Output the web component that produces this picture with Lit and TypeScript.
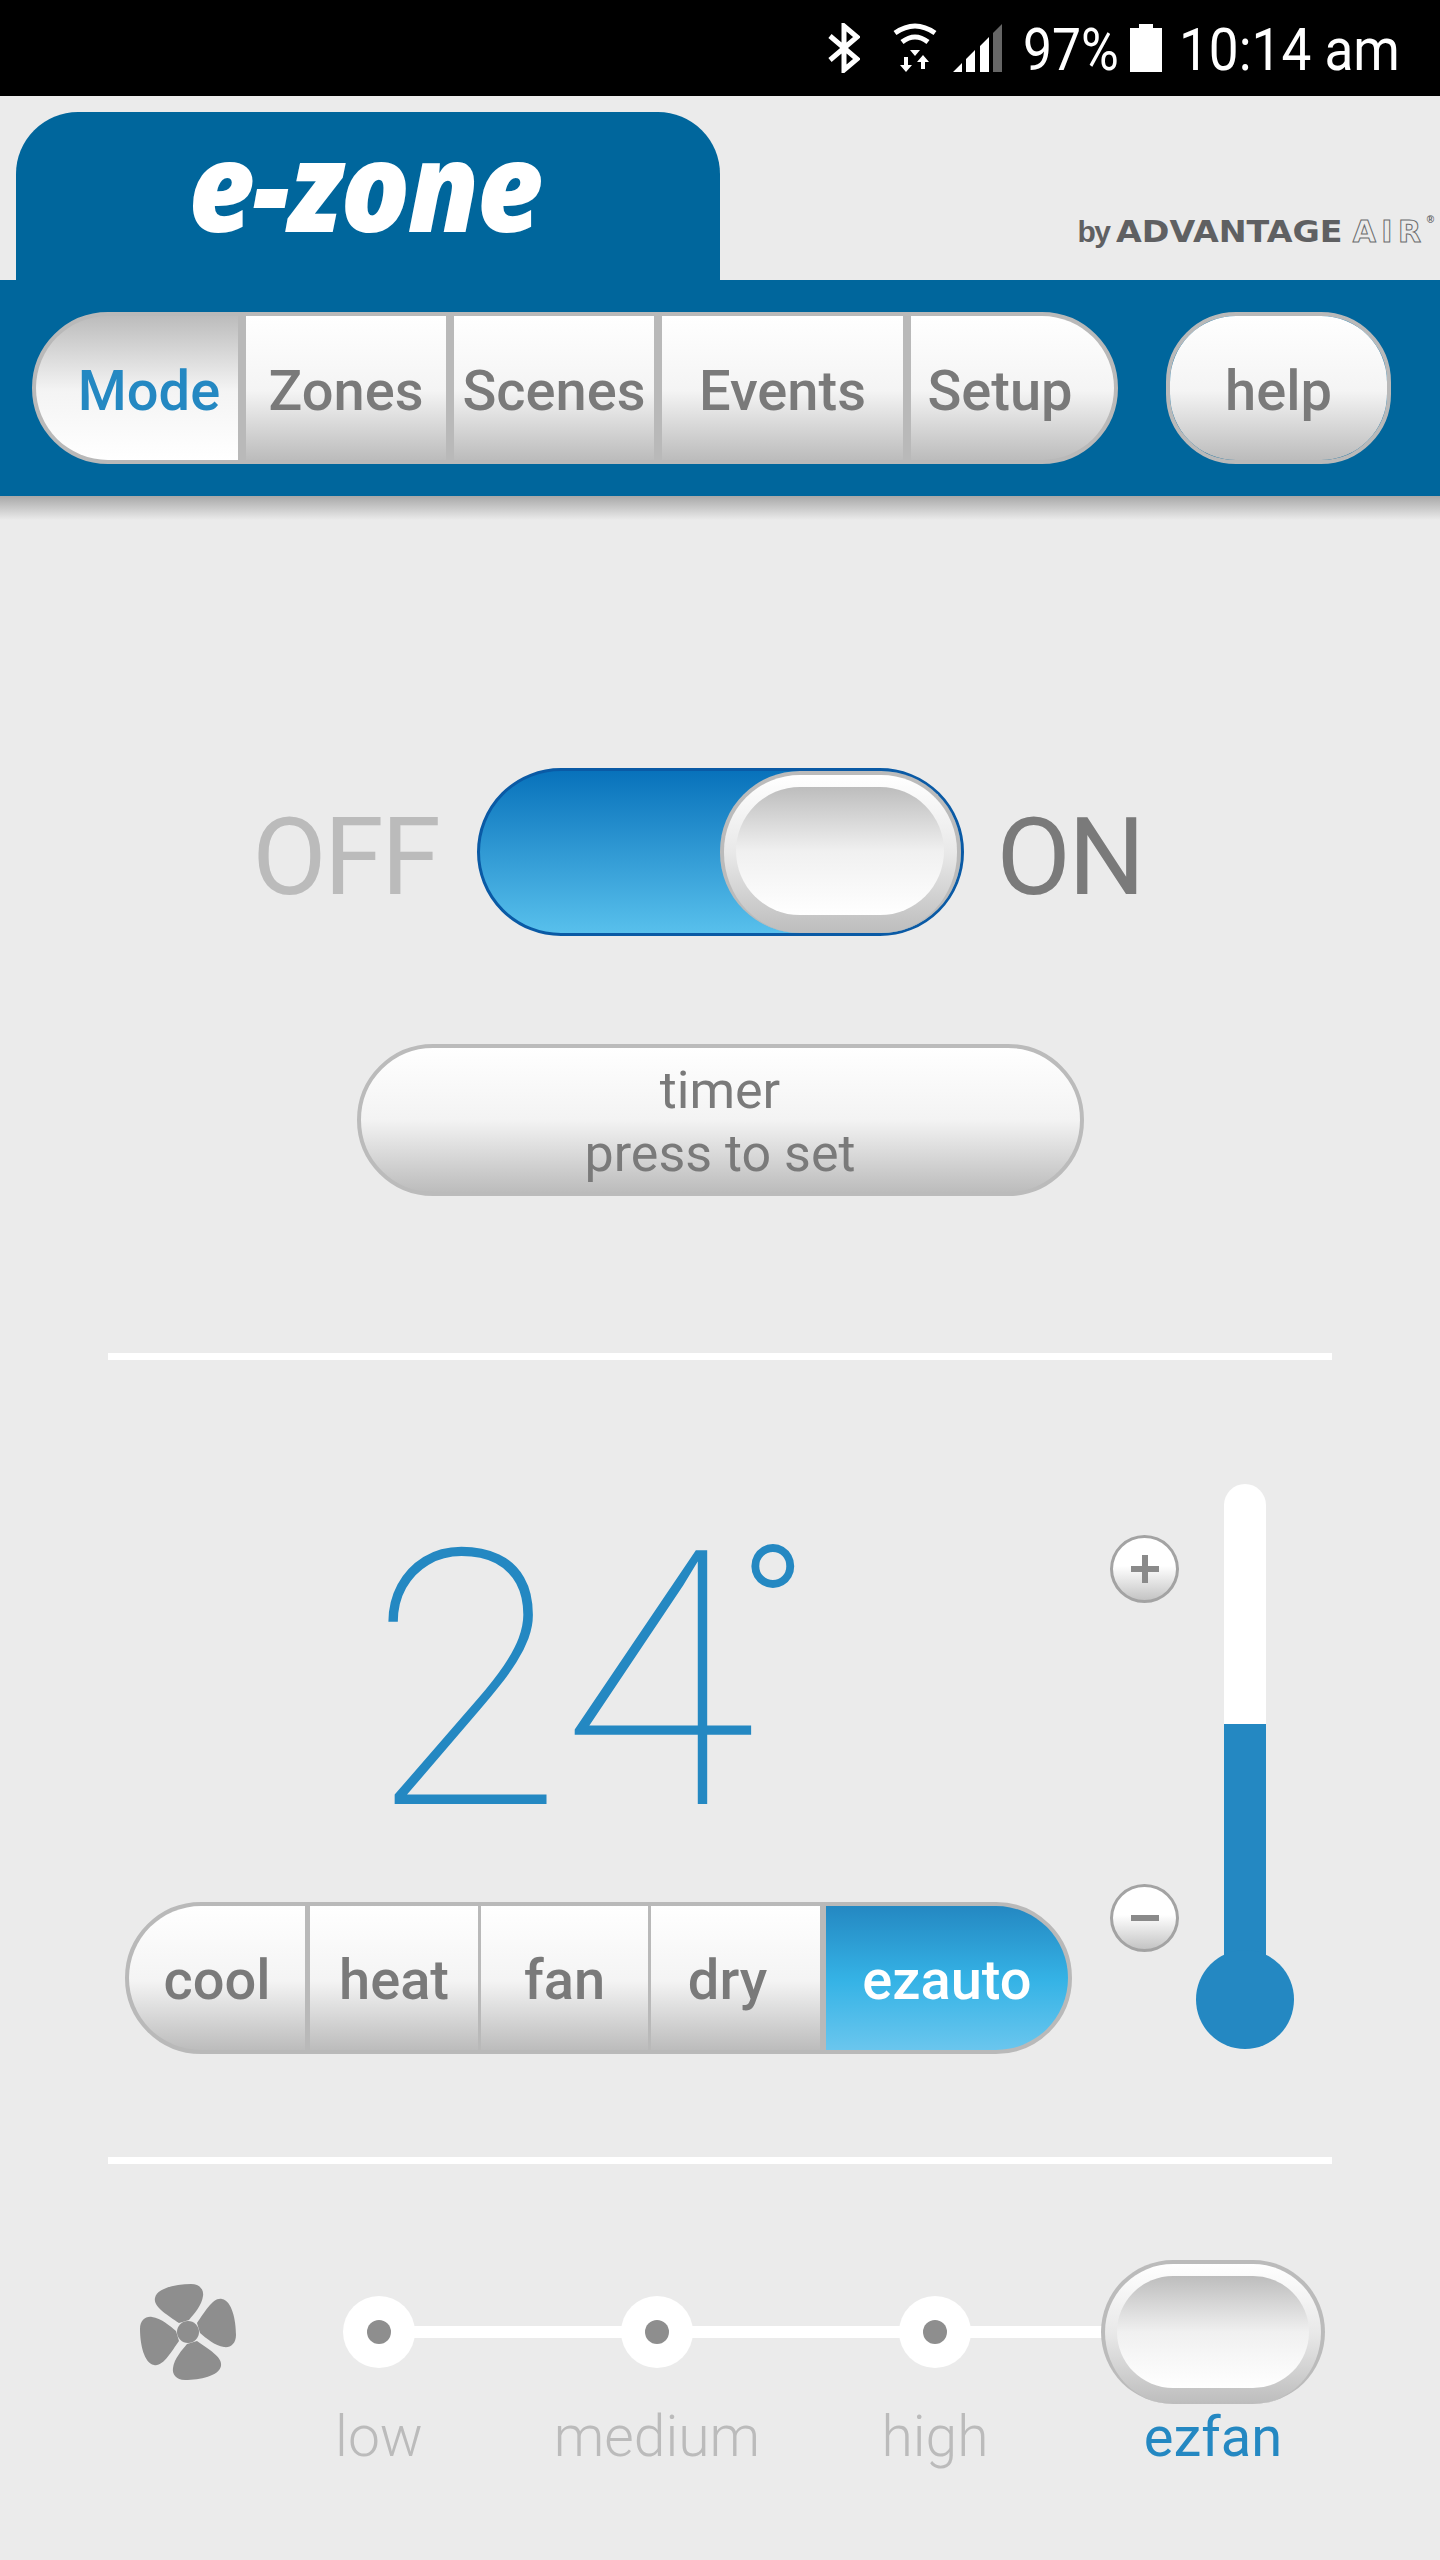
import { html, svg, css, LitElement } from 'lit';
import { customElement } from 'lit/decorators.js';

const NAV = ['Mode', 'Zones', 'Scenes', 'Events', 'Setup'];
const NAV_WIDTHS = [202, 200, 200, 241, 204];
const MODES = ['cool', 'heat', 'fan', 'dry', 'ezauto'];
const MODE_WIDTHS = [176, 168, 167, 169, 242];
const MODE_GAPS = [0, 5, 3, 3, 6];
const SPEEDS = ['low', 'medium', 'high', 'ezfan'];

const FAN_BLADE = 'M-9 -9C-20 -17 -35 -25 -33 -34C-31 -44 -12 -48 3 -48C12 -48 16 -42 15 -36C14 -27 6 -18 1 -12Z';

@customElement('app-root')
export class AppRoot extends LitElement {
  static styles = css`
    :host {
      display: block;
      width: 1440px;
      height: 2560px;
      overflow: hidden;
      background: #ebebeb;
      color: #7a7a7a;
      font-family: Roboto, "Liberation Sans", sans-serif;
    }
    svg { display: block; flex: none; }

    .status {
      height: 96px;
      background: #000;
      display: flex;
      align-items: center;
      color: #fff;
      padding-left: 828px;
      box-sizing: border-box;
    }
    .status .num {
      font-size: 60px;
      line-height: 96px;
      padding-top: 4px;
      transform-origin: left center;
      white-space: nowrap;
      flex: none;
    }
    .pct { width: 93px; margin-left: 21px; transform: scaleX(.86); }
    .clock { width: 217px; margin-left: 17px; transform: scaleX(.885); }

    .brand {
      height: 184px;
      display: flex;
      align-items: flex-end;
      justify-content: space-between;
      padding-left: 16px;
    }
    .tab {
      width: 704px;
      height: 168px;
      background: #00669c;
      border-radius: 62px 62px 0 0;
      display: flex;
      justify-content: center;
    }
    .logo {
      color: #fff;
      font-family: "Open Sans", sans-serif;
      font-weight: 800;
      font-style: italic;
      font-size: 124px;
      line-height: 144px;
      letter-spacing: -3px;
      margin-left: -7px;
      transform: scaleX(.93);
    }
    .by {
      display: flex;
      align-items: baseline;
      margin: 0 6px 31px 0;
      color: #5f6062;
      white-space: nowrap;
    }
    .by .small {
      font-family: "Liberation Sans", sans-serif;
      font-size: 30px;
      font-weight: 700;
      letter-spacing: -1.5px;
      margin-right: 6px;
    }
    .by .adv {
      font-family: "DejaVu Sans", sans-serif;
      font-weight: 700;
      font-size: 30px;
      margin-right: 33px;
      transform: scaleX(1.11);
      transform-origin: left center;
    }
    .by .air {
      font-family: "DejaVu Sans", sans-serif;
      font-weight: 700;
      font-size: 30px;
      color: transparent;
      -webkit-text-stroke: 1px #6a6b6d;
      letter-spacing: 5.5px;
    }
    .by .reg {
      font-family: "Liberation Sans", sans-serif;
      font-size: 10px;
      font-weight: 700;
      align-self: flex-start;
    }

    .navbar {
      height: 216px;
      background: #00669c;
      box-sizing: border-box;
      padding: 32px;
      display: flex;
      gap: 48px;
    }
    .group {
      display: flex;
      box-sizing: border-box;
      height: 152px;
      border: 4px solid #b9b9b9;
      border-radius: 76px;
      overflow: hidden;
      background: #b9b9b9;
    }
    .cell {
      display: flex;
      align-items: center;
      justify-content: center;
      box-sizing: border-box;
      background: linear-gradient(#fff 0%, #f4f4f4 52%, #bcbcbc 100%);
      font-size: 56px;
      font-weight: 500;
      padding-top: 6px;
      flex: none;
    }
    .nav .cell { margin-left: 8px; }
    .nav .cell:first-child { margin-left: 0; padding-left: 24px; }
    .nav .cell:last-child { padding-right: 26px; }
    .nav .cell.on {
      background: linear-gradient(#bcbcbc 0%, #f4f4f4 52%, #fff 100%);
      color: #2488c2;
    }
    .help {
      width: 225px;
      border-radius: 70px;
    }
    .help .cell { width: 100%; }

    .shadow {
      height: 24px;
      background: linear-gradient(#a8a8a8, #ebebeb);
    }

    .power {
      margin-top: 248px;
      height: 168px;
      display: grid;
      grid-template-columns: 1fr 487px 1fr;
      column-gap: 36px;
      align-items: center;
    }
    .power span {
      height: 168px;
      font-size: 108px;
      font-weight: 400;
      letter-spacing: -2.5px;
      line-height: 178px;
    }
    .power .off { justify-self: end; color: #bbb; margin-right: 2px; }
    .power .on-label { margin-left: -3px; }
    .toggle {
      box-sizing: border-box;
      height: 168px;
      border: 3px solid #0a5aa5;
      border-radius: 84px;
      background: linear-gradient(#0872bb, #58c0ec);
      display: flex;
      justify-content: flex-end;
    }
    .knob {
      box-sizing: border-box;
      height: 162px;
      border: 4px solid #bbb;
      border-bottom: none;
      border-radius: 80px;
      background: linear-gradient(#fff 0%, #e8e8e8 50%, #bdbdbd 100%);
      display: flex;
      justify-content: center;
    }
    .toggle .knob { width: 241px; padding-top: 12px; }
    .knob i {
      display: block;
      border-radius: 64px;
      background: linear-gradient(#bdbdbd 0%, #f0f0f0 50%, #fff 100%);
    }
    .toggle .knob i { width: 208px; height: 128px; }

    .timer {
      box-sizing: border-box;
      width: 727px;
      height: 152px;
      margin: 108px auto 0;
      border: 4px solid #bbb;
      border-radius: 76px;
      background: linear-gradient(#fff 0%, #f3f3f3 50%, #bcbcbc 100%);
      text-align: center;
      font-size: 52px;
      font-weight: 400;
      line-height: 63px;
      padding-top: 11px;
    }

    .rule {
      height: 7px;
      background: #fff;
      margin: 0 108px;
    }
    .rule.first { margin-top: 157px; }

    .climate {
      height: 797px;
      display: flex;
      padding-left: 125px;
    }
    .left { width: 947px; }
    .temp {
      height: 542px;
      box-sizing: border-box;
      padding: 152px 0 0 243px;
      color: #2488c2;
      display: flex;
      align-items: flex-start;
    }
    .digits {
      font-size: 357px;
      font-weight: 100;
      letter-spacing: -3px;
      line-height: 340px;
    }
    /* pull the 4's advance in so the degree sign sits against it */
    .digits b { font-weight: 100; letter-spacing: -17px; }
    .deg {
      font-size: 180px;
      font-weight: 300;
      line-height: 180px;
      margin-top: 11px;
    }
    .modes { width: 947px; }
    .modes .cell { font-size: 56px; padding-top: 4px; }
    .modes .cell:nth-child(4) { padding-right: 16px; }
    .modes .cell.on {
      color: #fff;
      background: linear-gradient(#2488c2 0%, #35b3e6 52%, #6ac6ee 100%);
    }
    .steppers {
      width: 69px;
      margin-left: 38px;
      padding-top: 175px;
      display: flex;
      flex-direction: column;
      gap: 281px;
    }
    .step {
      box-sizing: border-box;
      width: 69px;
      height: 68px;
      border: 3px solid #a3a3a3;
      border-radius: 50%;
      background: linear-gradient(#fff 45%, #c4c4c4 100%);
      display: flex;
      align-items: center;
      justify-content: center;
    }
    .thermo {
      width: 98px;
      margin-left: 17px;
      padding-top: 124px;
      display: flex;
      flex-direction: column;
      align-items: center;
    }
    .tube { width: 42px; flex: none; }
    .tube.empty { height: 240px; background: #fff; border-radius: 21px 21px 0 0; }
    .tube.full { height: 236px; background: #2488c2; }
    .bulb {
      width: 98px;
      height: 99px;
      flex: none;
      margin-top: -10px;
      border-radius: 50%;
      background: #2488c2;
    }

    .fan {
      display: flex;
      padding: 96px 0 0 138px;
    }
    .fan > svg { margin-top: 22px; }
    .speeds {
      position: relative;
      margin-left: 2px;
      display: flex;
    }
    .track {
      position: absolute;
      left: 139px;
      top: 66px;
      width: 740px;
      height: 12px;
      background: #fff;
    }
    .speed {
      position: relative;
      width: 278px;
      display: flex;
      flex-direction: column;
      align-items: center;
    }
    .mark {
      height: 144px;
      display: flex;
      align-items: center;
    }
    .dot {
      box-sizing: border-box;
      width: 72px;
      height: 72px;
      border-radius: 50%;
      background: #fff;
      display: flex;
      align-items: center;
      justify-content: center;
    }
    .dot i {
      width: 24px;
      height: 24px;
      border-radius: 50%;
      background: #8e8e8e;
    }
    .mark .knob { width: 224px; height: 144px; padding-top: 12px; border-bottom: none; }
    .mark .knob i { width: 192px; height: 112px; }
    .speed label {
      font-size: 57px;
      font-weight: 300;
      line-height: 66px;
      color: #bbb;
    }
    .speed.on label { color: #2488c2; font-weight: 400; font-size: 56px; }
  `;

  private statusIcons() {
    return html`
      <svg width="32" height="50" viewBox="0 0 32 50" fill="none" stroke="#fff" stroke-width="5">
        <path d="M2 13L29 36L16 47V3L29 14L2 37" />
      </svg>
      <svg style="margin-left:33px" width="44" height="50" viewBox="0 0 44 50" fill="#fff">
        <path d="M2 10Q22 -4 42 10M9 19Q22 9 35 19" fill="none" stroke="#fff" stroke-width="5" />
        <path d="M17 27H27L22 33ZM11 34H15V42H19L13 49L7 42H11ZM28 39H32V46H28ZM24 39L30 32L36 39Z" />
      </svg>
      <svg style="margin-left:16px" width="49" height="48" viewBox="0 0 49 48" fill="#fff">
        <path d="M0 48L9 39V48ZM13 35L22 26V48H13ZM27 22L36 13V48H27Z" />
        <path d="M40 9L49 0V48H40Z" fill="#666" />
      </svg>
    `;
  }

  private fanIcon() {
    return html`
      <svg width="100" height="100" viewBox="-50 -50 100 100" fill="#8e8e8e">
        ${[0, 90, 180, 270].map(r => svg`
          <path d=${FAN_BLADE} transform="rotate(${r})" />
        `)}
        <circle r="11" />
      </svg>
    `;
  }

  render() {
    return html`
      <div class="status">
        ${this.statusIcons()}
        <span class="num pct">97%</span>
        <svg style="margin-left:14px" width="32" height="48" viewBox="0 0 32 48" fill="#fff">
          <path d="M9 0H23V4H32V48H0V4H9Z" />
        </svg>
        <span class="num clock">10:14 am</span>
      </div>

      <div class="brand">
        <div class="tab"><div class="logo">e-zone</div></div>
        <div class="by">
          <span class="small">by</span>
          <span class="adv">ADVANTAGE</span>
          <span class="air">AIR</span>
          <span class="reg">®</span>
        </div>
      </div>

      <div class="navbar">
        <div class="group nav" style="width:1086px">
          ${NAV.map((n, i) => html`
            <div class="cell ${i === 0 ? 'on' : ''}" style="width:${NAV_WIDTHS[i]}px">${n}</div>
          `)}
        </div>
        <div class="group help"><div class="cell">help</div></div>
      </div>
      <div class="shadow"></div>

      <div class="power">
        <span class="off">OFF</span>
        <div class="toggle"><div class="knob"><i></i></div></div>
        <span class="on-label">ON</span>
      </div>

      <div class="timer">timer<br />press to set</div>

      <div class="rule first"></div>

      <div class="climate">
        <div class="left">
          <div class="temp"><span class="digits">2<b>4</b></span><span class="deg">°</span></div>
          <div class="group modes">
            ${MODES.map((m, i) => html`
              <div class="cell ${i === 4 ? 'on' : ''}" style="width:${MODE_WIDTHS[i]}px;margin-left:${MODE_GAPS[i]}px">${m}</div>
            `)}
          </div>
        </div>
        <div class="steppers">
          <div class="step">
            <svg width="30" height="30" viewBox="0 0 30 30" fill="#8a8a8a"><path d="M12 1H18V12H29V18H18V29H12V18H1V12H12Z" /></svg>
          </div>
          <div class="step">
            <svg width="28" height="6" viewBox="0 0 28 6" fill="#8a8a8a"><rect width="28" height="6" /></svg>
          </div>
        </div>
        <div class="thermo">
          <div class="tube empty"></div>
          <div class="tube full"></div>
          <div class="bulb"></div>
        </div>
      </div>

      <div class="rule"></div>

      <div class="fan">
        ${this.fanIcon()}
        <div class="speeds">
          <div class="track"></div>
          ${SPEEDS.map((s, i) => html`
            <div class="speed ${i === 3 ? 'on' : ''}">
              <div class="mark">
                ${i === 3
                  ? html`<div class="knob"><i></i></div>`
                  : html`<div class="dot"><i></i></div>`}
              </div>
              <label>${s}</label>
            </div>
          `)}
        </div>
      </div>
    `;
  }
}
